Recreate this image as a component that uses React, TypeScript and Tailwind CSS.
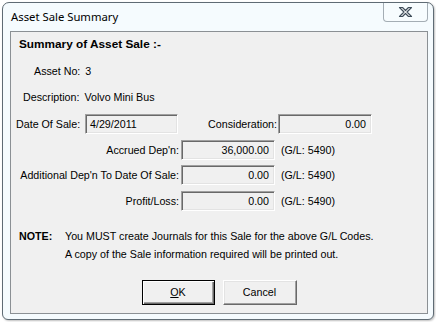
import React from 'react'

const sunken =
  'h-[20px] border border-t-[#a0a0a0] border-l-[#a0a0a0] border-r-white border-b-white shadow-[inset_1px_1px_0_#696969,inset_-1px_-1px_0_#e3e3e3] bg-[#f0f0f0] flex items-center justify-end pr-[5px]'

function Field({ value, width, align = 'right' }: { value: string; width: number; align?: 'left' | 'right' }) {
  return (
    <div
      className={`${sunken} ${align === 'left' ? '!justify-start pl-[4px]' : ''}`}
      style={{ width }}
    >
      {value}
    </div>
  )
}

function DepRow({ label, value }: { label: string; value: string }) {
  return (
    <div className="flex items-center h-[20px]">
      <div className="w-[168px] text-right">{label}</div>
      <div className="ml-[2px]">
        <Field value={value} width={94} />
      </div>
      <div className="ml-[6px]">(G/L: 5490)</div>
    </div>
  )
}

function CloseGlyph() {
  return (
    <svg width="15" height="12" viewBox="0 0 15 12">
      <path
        d="M1.5 1.5h3l3 3 3-3h3l-4.5 4.5 4.5 4.5h-3l-3-3-3 3h-3l4.5-4.5z"
        fill="#ffffff"
        stroke="#3f4d5a"
        strokeWidth="1.2"
        strokeLinejoin="round"
      />
    </svg>
  )
}

export default function App() {
  return (
    <div className="w-[436px] h-[322px] bg-white overflow-hidden">
      <div className="relative ml-[2px] mt-[2px] w-[432px] h-[318px] border border-[#5f6b74] rounded-t-[7px] rounded-b-[6px] bg-[#f5fbfe] shadow-[1px_1px_2px_rgba(0,0,0,0.25)]">
        {/* title bar */}
        <div className="h-[28px] flex items-center pl-[8px] text-[11.3px] text-black" style={{ fontFamily: '"Noto Sans", "Open Sans", sans-serif' }}>
          Asset Sale Summary
        </div>
        <div className="absolute top-0 right-[5px] w-[45px] h-[19px] border border-t-0 border-[#a4adb4] rounded-b-[4px] bg-[#f7fcfe] flex items-center justify-center">
          <CloseGlyph />
        </div>

        {/* client panel */}
        <div
          className="ml-[7px] w-[418px] h-[283px] border border-[#8b9094] bg-[#f0f0f0] text-[10.7px] text-black flex flex-col"
          style={{ fontFamily: '"Liberation Sans", Arial, sans-serif' }}
        >
          <div className="h-[26px] flex items-center pl-[8px] font-bold text-[11.8px]">Summary of Asset Sale :-</div>
          <div className="h-[26px] flex items-center pl-[23px]">
            Asset No:<span className="ml-[5px]">3</span>
          </div>
          <div className="h-[26px] flex items-center pl-[12px]">
            Description:<span className="ml-[5px]">Volvo Mini Bus</span>
          </div>

          <div className="mt-[4px] flex items-center h-[20px]">
            <div className="w-[74px] pl-[5px]">Date Of Sale:</div>
            <Field value="4/29/2011" width={93} align="left" />
            <div className="w-[99px] text-right">Consideration:</div>
            <div className="ml-[1px]">
              <Field value="0.00" width={94} />
            </div>
          </div>

          <div className="mt-[6px]">
            <DepRow label="Accrued Dep'n:" value="36,000.00" />
          </div>
          <div className="mt-[5px]">
            <DepRow label="Additional Dep'n To Date Of Sale:" value="0.00" />
          </div>
          <div className="mt-[6px]">
            <DepRow label="Profit/Loss:" value="0.00" />
          </div>

          <div className="mt-[16px] flex leading-[18px]">
            <div className="w-[54px] pl-[8px] font-bold">NOTE:</div>
            <div>
              <div>You MUST create Journals for this Sale for the above G/L Codes.</div>
              <div>A copy of the Sale information required will be printed out.</div>
            </div>
          </div>

          <div className="mt-[17px] flex justify-center gap-[8px]">
            <button className="w-[73px] h-[25px] border border-black bg-[#f0f0f0] shadow-[inset_1px_1px_0_#ffffff,inset_-1px_-1px_0_#696969,inset_-2px_-2px_0_#a0a0a0] flex items-center justify-center">
              <span><span className="underline">O</span>K</span>
            </button>
            <button className="w-[74px] h-[25px] border border-t-white border-l-white border-r-[#696969] border-b-[#696969] bg-[#f0f0f0] shadow-[inset_-1px_-1px_0_#a0a0a0,inset_1px_1px_0_#e3e3e3] flex items-center justify-center">
              Cancel
            </button>
          </div>
        </div>
      </div>
    </div>
  )
}
